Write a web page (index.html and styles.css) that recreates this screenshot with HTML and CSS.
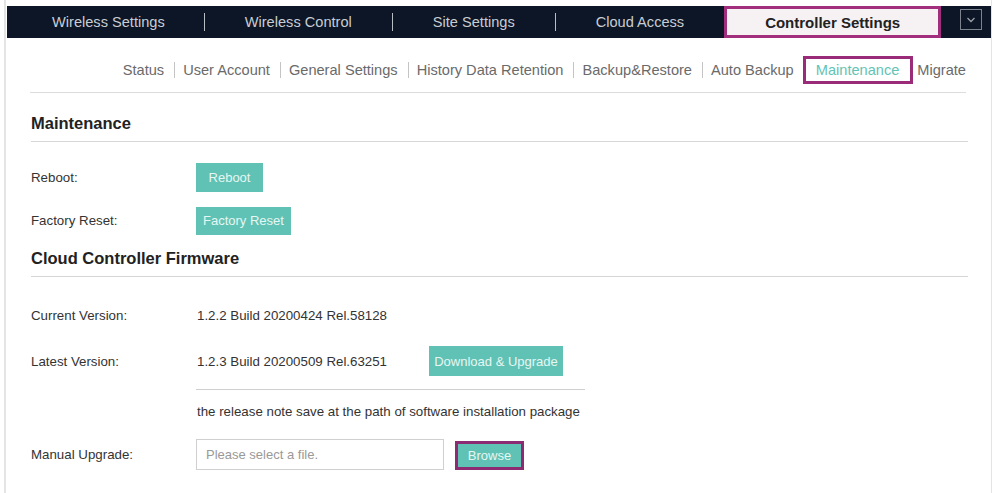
FILE: index.html
```html
<!DOCTYPE html>
<html lang="en">
<head>
  <meta charset="UTF-8" />
  <meta name="viewport" content="width=device-width, initial-scale=1.0"/>
  <title>Controller Settings - Maintenance</title>
  <link rel="stylesheet" href="styles.css">
</head>
<body>
  <div class="page">
    <div class="topnav">
      <a class="nav-item first">Wireless Settings</a>
      <a class="nav-item">Wireless Control</a>
      <a class="nav-item">Site Settings</a>
      <a class="nav-item">Cloud Access</a>
      <a class="nav-item active">Controller Settings</a>
      <span class="nav-more">
        <svg width="10" height="6" viewBox="0 0 10 6"><path d="M1.5 1 L5 4.5 L8.5 1" fill="none" stroke="#9aa0a8" stroke-width="1.3"/></svg>
      </span>
    </div>

    <div class="subnav">
      <a class="sub-item first">Status</a>
      <a class="sub-item">User Account</a>
      <a class="sub-item">General Settings</a>
      <a class="sub-item">History Data Retention</a>
      <a class="sub-item">Backup&amp;Restore</a>
      <a class="sub-item">Auto Backup</a>
      <a class="sub-item active">Maintenance</a>
      <a class="sub-item after-active">Migrate</a>
    </div>

    <div class="content">
      <h2 class="section-title">Maintenance</h2>
      <div class="row row-reboot">
        <span class="label">Reboot:</span>
        <button class="btn btn-reboot">Reboot</button>
      </div>
      <div class="row row-reset">
        <span class="label">Factory Reset:</span>
        <button class="btn btn-reset">Factory Reset</button>
      </div>

      <h2 class="section-title fw-title">Cloud Controller Firmware</h2>
      <div class="row row-current">
        <span class="label">Current Version:</span>
        <span class="value">1.2.2 Build 20200424 Rel.58128</span>
      </div>
      <div class="row row-latest">
        <span class="label">Latest Version:</span>
        <span class="value">1.2.3 Build 20200509 Rel.63251</span>
        <button class="btn btn-download">Download &amp; Upgrade</button>
      </div>
      <div class="note-line"></div>
      <div class="row row-note">
        <span class="label"></span>
        <span class="value">the release note save at the path of software installation package</span>
      </div>
      <div class="row row-manual">
        <span class="label">Manual Upgrade:</span>
        <input class="file-input" type="text" placeholder="Please select a file.">
        <button class="btn btn-browse">Browse</button>
      </div>
    </div>
  </div>
</body>
</html>
```

FILE: styles.css
```css
body {
  margin: 0;
  background: #ffffff;
  font-family: "Liberation Sans", Arial, sans-serif;
  color: #333;
}
.page {
  margin: 0 1px 0 4px;
  height: 493px;
  padding-top: 6px;
  box-sizing: border-box;
  border-left: 2px solid #e4e4e4;
  border-right: 1px solid #e4e4e4;
}
.topnav {
  display: flex;
  align-items: center;
  height: 32px;
  margin-left: 1px;
  background: #0c1626;
}
.nav-item {
  display: flex;
  align-items: center;
  padding: 0 40px 0 40px;
  height: 18px;
  font-size: 14.6px;
  color: #c9cdd3;
  border-left: 1px solid #b8bcc4;
  white-space: nowrap;
}
.nav-item.first {
  border-left: none;
  padding-left: 45px;
  padding-right: 39px;
}
.nav-item.active {
  height: 26px;
  width: 211px;
  box-sizing: content-box;
  padding: 0;
  justify-content: center;
  background: #f6f1f3;
  color: #222;
  font-size: 15px;
  font-weight: bold;
  border: 3px solid #a12f7d;
}
.nav-more {
  display: flex;
  align-items: center;
  justify-content: center;
  width: 22px;
  height: 21px;
  margin-left: 19px;
  margin-top: -5px;
  border: 1px solid #7d838c;
  box-sizing: border-box;
}
.subnav {
  display: flex;
  justify-content: flex-end;
  align-items: center;
  height: 28px;
  margin: 18px 25px 0 24px;
  padding-bottom: 8px;
  border-bottom: 1px solid #dcdcdc;
}
.sub-item {
  padding: 0 10px 0 8px;
  font-size: 14.6px;
  line-height: 16px;
  color: #6a6a6a;
  border-left: 1px solid #c4c4c4;
  white-space: nowrap;
}
.sub-item.first {
  border-left: none;
}
.sub-item.active {
  color: #63c3b5;
  border: 3px solid #9a2b78;
  padding: 3px 11px 3px 10px;
  margin-left: -1px;
}
.sub-item.after-active {
  border-left: none;
  padding-left: 4px;
  padding-right: 0;
}
.content {
  margin: 0 23px 0 25px;
}
.section-title {
  margin: 0;
  padding: 21px 0 9px;
  font-size: 16.5px;
  line-height: 18px;
  font-weight: bold;
  color: #222;
  border-bottom: 1px solid #d6d6d6;
}
.fw-title {
  padding-top: 14px;
  padding-bottom: 9px;
}
.row {
  display: flex;
  align-items: center;
  font-size: 13.3px;
  color: #333;
}
.label {
  width: 166px;
  flex-shrink: 0;
}
.row .btn,
.row .file-input {
  margin-left: -1px;
}
.btn {
  border: none;
  background: #5fc2b4;
  color: #e6f6f3;
  font-family: "Liberation Sans", Arial, sans-serif;
  font-size: 13px;
  padding: 0;
  height: 29px;
}
.row-reboot {
  margin-top: 20px;
  height: 30px;
}
.btn-reboot {
  width: 67px;
}
.row-reset {
  margin-top: 14px;
  height: 29px;
}
.btn-reset {
  width: 95px;
  height: 28px;
}
.row-current {
  margin-top: 23px;
  height: 30px;
}
.row-latest {
  margin-top: 16px;
  height: 30px;
}
.row .btn-download {
  width: 134px;
  height: 30px;
  margin-left: 42px;
}
.note-line {
  margin: 13px 0 0 165px;
  width: 389px;
  border-top: 1px solid #cfcfcf;
}
.row-note {
  margin-top: 12px;
  height: 18px;
}
.row-manual {
  margin-top: 19px;
  height: 31px;
}
.file-input {
  width: 248px;
  height: 31px;
  box-sizing: border-box;
  border: 1px solid #d0d0d0;
  padding: 0 9px;
  font-family: "Liberation Sans", Arial, sans-serif;
  font-size: 13px;
}
.file-input::placeholder {
  color: #999;
}
.row .btn-browse {
  width: 69px;
  height: 29px;
  margin-left: 11px;
  margin-top: 2px;
  border: 3px solid #8c2a72;
}
```
